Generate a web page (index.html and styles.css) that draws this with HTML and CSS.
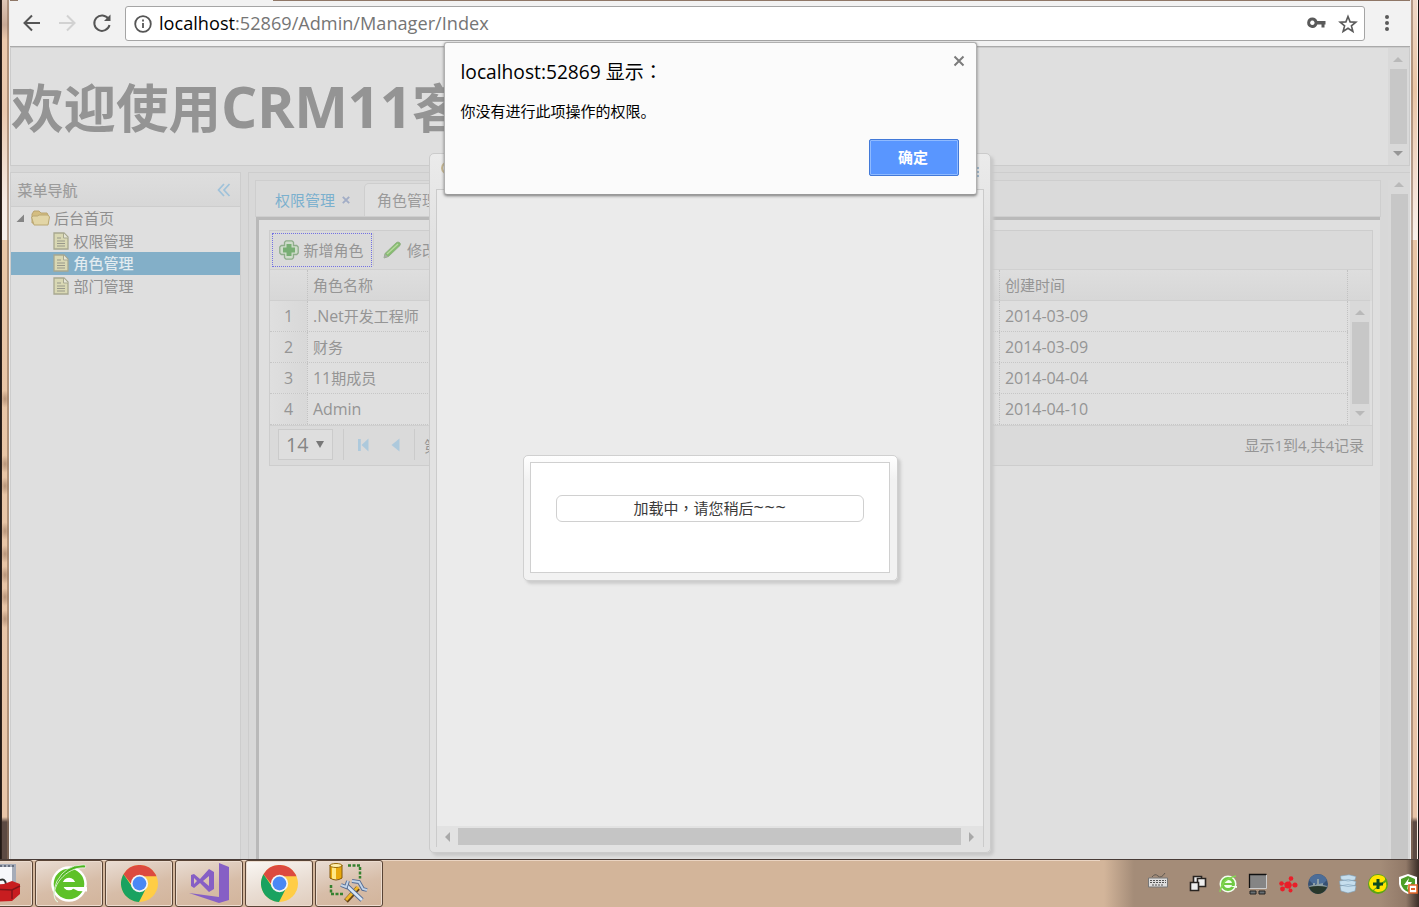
FILE: index.html
```html
<!DOCTYPE html>
<html lang="zh-CN">
<head>
<meta charset="utf-8">
<title>CRM</title>
<link rel="stylesheet" href="styles.css">
</head>
<body>
<svg class="defs" width="0" height="0">
  <symbol id="doc" viewBox="0 0 16 18"><path d="M1 1h10l4 4v12H1z" fill="#d9d8b4" stroke="#a8a890" stroke-width="1.3"/><path d="M10.500 1v5H15" fill="#e6e6d8" stroke="#a8a890"/><path d="M4 6h4M4 9h8M4 11.500h8M4 14h8" stroke="#97978a" stroke-width="1.200"/></symbol>
  <symbol id="chrome" viewBox="0 0 36 36"><circle cx="18" cy="18" r="18" fill="#ffcd46"/><path d="M2.400 9A18 18 0 0 1 33.600 9L34.500 11H18a7.500 7.500 0 0 0-7.500 8z" fill="#dc4a3f"/><path d="M2.400 9A18 18 0 0 0 17.500 36L25 21.500a8 8 0 0 1-14 0z" fill="#1aa260"/><circle cx="18" cy="18" r="8.400" fill="#f4f4f4"/><circle cx="18" cy="18" r="6.700" fill="#4a88f4"/></symbol>
</svg>
<div class="screen">
  <div class="edge edge-left"></div>
  <div class="browser">
    <div class="tabstrip"><i></i></div>
    <div class="toolbar">
      <svg class="nav" width="90" height="20" viewBox="0 0 90 20" fill="none" stroke="#555" stroke-width="2"><path d="M17 10H2M9 2.500L1.500 10 9 17.500"/><path d="M36 10h15M44 2.500l7.500 7.500-7.500 7.500" stroke="#d2d2d2"/><path d="M85.500 6A7.700 7.700 0 1 0 86.500 12"/><path d="M87.500 1.500V8H81z" fill="#555" stroke="none"/></svg>
      <div class="omnibox">
        <svg width="18" height="18" viewBox="0 0 18 18" fill="none" stroke="#555" stroke-width="1.800"><circle cx="9" cy="9" r="7.800"/><path d="M9 8v5M9 4.500v2"/></svg>
        <span class="url"><b>localhost</b>:52869/Admin/Manager/Index</span>
        <svg class="key" width="19" height="12" viewBox="0 0 19 12"><path fill="#5a5a5a" fill-rule="evenodd" d="M5.500 0.500a5.200 5.200 0 0 1 4.800 3.500H18.500v3.500H17.500V10.500H14.500V7.500H10.300A5.200 5.200 0 1 1 5.500.5zM5.300 3.600a2.200 2.200 0 1 0 .1 0z"/></svg>
        <svg width="20" height="20" viewBox="0 0 20 20" fill="none" stroke="#5a5a5a" stroke-width="1.600"><path d="M10 2.500l2.100 5.400 5.700.3-4.400 3.600 1.500 5.600-4.900-3.100-4.900 3.100 1.500-5.600-4.400-3.600 5.700-.3z"/></svg>
      </div>
      <svg class="dots" width="6" height="18" viewBox="0 0 6 18" fill="#5a5a5a"><circle cx="3" cy="3" r="2"/><circle cx="3" cy="9" r="2"/><circle cx="3" cy="15" r="2"/></svg>
    </div>
    <div class="page">
      <header class="banner"><h1>欢迎使用<span>CRM11</span>客</h1>
        <div class="vbar"><i class="up"></i><b></b><i class="down"></i></div>
      </header>
      <div class="columns">
        <aside class="sidebar">
          <div class="side-head"><span>菜单导航</span><svg width="14" height="14" viewBox="0 0 14 14" fill="none" stroke="#9fc2da" stroke-width="1.700"><path d="M7 1L1.500 7 7 13M12.500 1L7 7l5.500 6"/></svg></div>
          <div class="node root"><svg width="9" height="9" viewBox="0 0 9 9"><path d="M8 .5V8H.5z" fill="#858585"/></svg><svg class="folder" width="19" height="16" viewBox="0 0 19 16"><path d="M1 13V4l2-3h5l2 2h6l1 2v9z" fill="#d4bd80" stroke="#b9a470"/><path d="M.5 7l2-1h4l1.500-1h9l1.500 2-1.500 8H3z" fill="#e2d5a6" stroke="#bba873"/></svg><span>后台首页</span></div>
          <div class="node first"><svg width="16" height="18"><use href="#doc"/></svg><span>权限管理</span></div>
          <div class="node selected"><svg width="16" height="18"><use href="#doc"/></svg><span>角色管理</span></div>
          <div class="node"><svg width="16" height="18"><use href="#doc"/></svg><span>部门管理</span></div>
        </aside>
        <main class="main">
          <div class="workspace">
            <div class="tabs"><div class="tab current"><span>权限管理</span><svg width="8" height="8" viewBox="0 0 8 8"><path d="M.8.8l6.400 6.400M7.200.8L.8 7.200" stroke="#a2adc6" stroke-width="1.900"/></svg></div><div class="tab other"><span>角色管理</span></div></div>
            <div class="tab-body">
              <div class="grid">
                <div class="grid-tools">
                  <div class="tool focused"><svg width="20" height="20" viewBox="0 0 20 20"><path d="M7 .8h6l1.500 1.500V5.500h3.200l1.500 1.500v6l-1.500 1.500h-3.200v3.200L13 19.200H7l-1.500-1.500v-3.200H2.300L.8 13V7l1.500-1.500h3.200V2.300z" fill="#cfdccb" stroke="#8fad8b" stroke-width="1.300"/><path d="M7.500 4h5v3.500H16v5h-3.500V16h-5v-3.500H4v-5h3.500z" fill="#78ae74"/></svg><span>新增角色</span></div>
                  <div class="tool edit"><svg width="18" height="18" viewBox="0 0 18 18"><path d="M2 12.500L13.500 1.500q1.500-1 3 0t.5 3L5.500 15.500 1 17z" fill="#86bd70" stroke="#8aa97e" stroke-width=".8"/><path d="M4 13L15 3" stroke="#b9d8a2" stroke-width="1.300"/><path d="M1 17l1-4 3 2.500z" fill="#aaa"/></svg><span>修改角色</span></div>
                </div>
                <div class="grid-row heading"><div class="num"></div><div class="name">角色名称</div><div class="date">创建时间</div></div>
                <div class="grid-data">
                  <div class="rows">
                    <div class="grid-row"><div class="num lat">1</div><div class="name"><span class="lat">.Net</span>开发工程师</div><div class="date lat">2014-03-09</div></div>
                    <div class="grid-row"><div class="num lat">2</div><div class="name">财务</div><div class="date lat">2014-03-09</div></div>
                    <div class="grid-row"><div class="num lat">3</div><div class="name"><span class="lat">11</span>期成员</div><div class="date lat">2014-04-04</div></div>
                    <div class="grid-row"><div class="num lat">4</div><div class="name lat">Admin</div><div class="date lat">2014-04-10</div></div>
                  </div>
                  <div class="vbar"><i class="up"></i><b></b><i class="down pale"></i></div>
                </div>
                <div class="pager">
                  <div class="size"><span>14</span><i></i></div>
                  <div class="pages"><svg width="12" height="14" viewBox="0 0 12 14" fill="#adc9dc"><path d="M1 1h2.800v12H1zM11.500 .5v13L4.500 7z"/></svg><svg width="9" height="14" viewBox="0 0 9 14" fill="#adc9dc"><path d="M8.500 .5v13L.5 7z"/></svg></div>
                  <span class="pageno">第</span>
                  <span class="total">显示1到4,共4记录</span>
                </div>
              </div>
            </div>
          </div>
          <div class="vbar tall"><i class="up"></i><b></b></div>
        </main>
      </div>
    </div>
  </div>
  <div class="edge edge-right"></div>
</div>

<div class="window">
  <div class="window-title"><i></i><b></b></div>
  <div class="window-body"><div class="hbar"><i class="left"></i><b></b><i class="right"></i></div></div>
</div>
<div class="loading"><div class="loading-body"><div class="pill">加载中<span class="mid" lang="zh-TW">，</span>请您稍后<span class="tilde">~~~</span></div></div></div>

<div class="alert">
  <div class="alert-head"><span><em>localhost:52869</em> 显示<span class="mid" lang="zh-TW">：</span></span><svg width="12" height="12" viewBox="0 0 12 12"><path d="M1.500 1.500l9 9M10.500 1.500l-9 9" stroke="#7b7b7b" stroke-width="2"/></svg></div>
  <p>你没有进行此项操作的权限。</p>
  <button>确定</button>
</div>

<div class="taskbar">
  <div class="task clipped"><svg width="54" height="40" viewBox="0 0 54 40"><path d="M16 1h28v28H16z" fill="#a6acb8"/><path d="M18 4h22v22H18z" fill="#f7f8fb"/><path d="M16 3h28" stroke="#666f80" stroke-width="2" stroke-dasharray="2 2"/><path d="M28 17q5-2 6 4" fill="none" stroke="#333" stroke-width="2"/><path d="M20 22l12-1 8-3 8 3v10l-8 7-20 1z" fill="#c81d20"/><path d="M20 26l20 1 8-4M40 27v9" fill="none" stroke="#82151a" stroke-width="1.500"/></svg></div>
  <div class="task"><svg width="38" height="40" viewBox="0 0 38 40"><circle cx="19" cy="21" r="17.800" fill="#fff"/><circle cx="19" cy="21" r="10.800" fill="none" stroke="#5ec128" stroke-width="9"/><path d="M10 21.500h24" stroke="#5ec128" stroke-width="5"/><path d="M20 24h17v4.500l-9-.5z" fill="#fff"/><path d="M6 38C-1 25 16 3 35 5q2-4-3-3Q16 2 7 18 0 34 8 39z" fill="#4cb51e" stroke="#eef8e9" stroke-width=".8"/></svg></div>
  <div class="task"><svg width="37" height="37"><use href="#chrome"/></svg></div>
  <div class="task"><svg width="40" height="40" viewBox="0 0 40 40" fill="#865fc5"><path d="M30 0l10 4v33l-10 3L0 30l30 4z"/><path fill-rule="evenodd" d="M2 12l3-1 6 5 9-10 5 3v17l-5 3-9-9-6 5-3-2zm3 3v6l3-3zm9 3l6 5V13z"/></svg></div>
  <div class="task active"><svg width="37" height="37"><use href="#chrome"/></svg></div>
  <div class="task"><svg width="40" height="40" viewBox="0 0 40 40"><path d="M1 2h12v14H1z" fill="#e9a90c"/><path d="M3 2h4v15H3z" fill="#ffe885"/><ellipse cx="7" cy="2.500" rx="6" ry="2" fill="#fff0ad" stroke="#9b6b09"/><path d="M1 2v13q6 4 12 0V2" fill="none" stroke="#83580c"/><path d="M19 2.500h12v13M2 22v9h13" fill="none" stroke="#35812f" stroke-width="2.500" stroke-dasharray="3 1.500"/><path d="M17 38l12-13" stroke="#654316" stroke-width="5"/><path d="M17 37l12-13" stroke="#efb62b" stroke-width="3"/><path d="M16 21l17 16" stroke="#526a92" stroke-width="4.500"/><path d="M16 21l17 16" stroke="#d7e5f5" stroke-width="2.800"/><path d="M12 22l5 2 2-6M23 18l7 1 4 7 4 1" fill="none" stroke="#526a92" stroke-width="3.800"/><path d="M12 22l5 2 2-6M23 18l7 1 4 7 4 1" fill="none" stroke="#c3d4e8" stroke-width="2"/></svg></div>
  <div class="tray">
    <svg class="keyboard" width="20" height="17" viewBox="0 0 20 17"><path d="M4 4q3-4 6-1t7-3" fill="none" stroke="#5f5952"/><path d="M.5 5h19v9H.5z" fill="#ddd" stroke="#777"/><path d="M2 7.500h16M2 9.500h16M4 12h12" stroke="#555" stroke-dasharray="2 1"/></svg>
    <svg width="20" height="20" viewBox="0 0 20 20" fill="#eee" stroke="#292421" stroke-width="1.600"><path d="M5.500 2.500h8v7h-8z"/><path d="M9.500 4.500h8v8h-8z"/><path d="M2.500 8.500h8v8h-8z"/></svg>
    <svg width="20" height="20" viewBox="0 0 20 20"><circle cx="10" cy="10" r="8.500" fill="#f4fff0"/><circle cx="10" cy="10" r="5.500" fill="none" stroke="#70c944" stroke-width="3"/><path d="M4 10h12" stroke="#70c944" stroke-width="2"/><path d="M11 12h8v2z" fill="#f4fff0"/><path d="M2 18Q4 5 18 2" fill="none" stroke="#83d850" stroke-width="1.500"/></svg>
    <svg width="20" height="22" viewBox="0 0 20 22"><path d="M1.500 2h17v13h-17z" fill="#858585"/><path d="M1.500 15V1.500h17" fill="none" stroke="#111" stroke-width="1.300"/><path d="M18.500 2v13.500h-17" fill="none" stroke="#ccc"/><path d="M2 18h6v3H2zM11 18h6v3h-6z" fill="#686f73" stroke="#222"/></svg>
    <svg width="20" height="20" viewBox="0 0 20 20" fill="#ea1e29"><circle cx="10" cy="11" r="3.600"/><circle cx="3.500" cy="9.500" r="2.300"/><circle cx="13" cy="4.500" r="2.300"/><circle cx="17" cy="11" r="2.500"/><circle cx="4.500" cy="15" r="2.400"/><circle cx="12.500" cy="16.500" r="2"/><path d="M4 9l6 2 3-6M16 11h-6l-5 4M10 11l2 5" stroke="#ea1e29" stroke-width=".8" fill="none"/></svg>
    <svg width="20" height="20" viewBox="0 0 20 20"><circle cx="10" cy="10" r="10" fill="#375173"/><path d="M1 6A10 10 0 0 1 19 6L15 10H5z" fill="#4c6d98"/><path d="M1 12l4-1V9h2v2l2-1V5h2v5l4-1v2l4 1-1 2H2z" fill="#8fa0a5"/><path d="M1 13q9-2 18 0-3 7-9 7t-9-7z" fill="#28372b"/></svg>
    <svg width="20" height="20" viewBox="0 0 20 20" fill="#c6deed" stroke="#7e9fb8" stroke-width=".6"><path d="M2 12l8-1.500 8 1.500-1 5-7 2-7-2zM1.500 7l9-1.500 7.500 2-1 4-7 1-8-1.500zM2.500 2L11 .8l7 1.700-1 3.500-7 1-7-1.500z"/></svg>
    <svg width="20" height="20" viewBox="0 0 20 20"><circle cx="10" cy="10" r="10" fill="#5aa514"/><path d="M1 9Q3 0 11 1q7 1 6 5L5 16q-4-2-4-7zM18 8q2 9-7 10-4 0-5-2z" fill="#ffe500"/><path d="M10 5v10M5 10h10" stroke="#0d4a20" stroke-width="3"/></svg>
    <svg width="20" height="20" viewBox="0 0 20 20"><path d="M10 0l9 3v7q-2 7-9 10Q2 17 1 10V3z" fill="#fff"/><path d="M10 2l7 3v5q-1 5-7 8-6-3-7-8V5z" fill="#4d9e27"/><path d="M11 4l-5 7h4l-1 5 5-8h-4z" fill="#fff"/><path d="M11 11h8v8h-8z" fill="#fff" stroke="#e36628" stroke-width="1.600"/><path d="M13 15h4" stroke="#e36628" stroke-width="2"/></svg>
  </div>
</div>
</body>
</html>
```
FILE: styles.css
```css
* { box-sizing: border-box; }
body {
  margin: 0; width: 1419px; height: 907px; overflow: hidden; position: relative;
  display: flex; flex-direction: column; background: #d3b59a;
  font: 15px/20px "Open Sans", "Noto Sans CJK SC", sans-serif; color: #959595;
}
svg { display: block; flex: none; }
span { white-space: nowrap; }
.defs { position: absolute; }
.mid { font-family: "Noto Sans CJK TC", sans-serif; line-height: 1; }
.screen { height: 859px; display: flex; }
.edge { flex: none; }
.edge-left {
  width: 10px;
  background:
    linear-gradient(90deg, #211916 0 1px, #2d211c 1px 2px, transparent 2px 7px, #8b705c99 7px 9px, #eee 9px),
    radial-gradient(ellipse at center, #8f6c5588, transparent 70%) 0 390px / 10px 18px no-repeat,
    radial-gradient(ellipse at center, #8f6c5588, transparent 70%) 0 455px / 10px 18px no-repeat,
    radial-gradient(ellipse at center, #8f6c5588, transparent 70%) 0 477px / 10px 18px no-repeat,
    radial-gradient(ellipse at center, #8f6c5588, transparent 70%) 0 522px / 10px 18px no-repeat,
    radial-gradient(ellipse at center, #8f6c5588, transparent 70%) 0 545px / 10px 18px no-repeat,
    radial-gradient(ellipse at center, #8f6c5588, transparent 70%) 0 566px / 10px 18px no-repeat,
    radial-gradient(ellipse at center, #8f6c5588, transparent 70%) 0 588px / 10px 18px no-repeat,
    radial-gradient(ellipse at center, #8f6c5588, transparent 70%) 0 610px / 10px 18px no-repeat,
    linear-gradient(#dfc6b6 0, #c9aa96 25px, #ecc9ac 40px, #e9c8ad 110px, #f6eae2 200px, #f8f1ec 240px, #e9c6a6 240px, #e8c5a8 817px, #5c4a43 822px);
}
.edge-right {
  width: 9px;
  background:
    linear-gradient(90deg, #eee 0 1px, #8b705c99 1px 3px, transparent 3px 7px, #f9ede2 7px 8px, #161312 8px),
    linear-gradient(#eed8c7 0, #e9c5a5 90px, #f3ded0 180px, #f8f1ec 240px, #e9c6a6 240px, #e8c5a8 817px, #5c4a43 822px);
}
.browser { width: 1400px; display: flex; flex-direction: column; background: #f2f2f2; }
.tabstrip { height: 1px; background: #8f7767; padding-left: 8px; }
.tabstrip i { display: block; width: 255px; height: 1px; background: #f2f2f2; }
.toolbar { height: 46px; border-bottom: 1px solid #aaa; display: flex; align-items: center; padding: 0 20px 0 13px; }
.nav { margin-right: 12px; margin-bottom: 1px; }
.omnibox { width: 1240px; height: 35px; border: 1px solid #a5a5a5; border-radius: 3px; background: #fff; display: flex; align-items: center; padding: 0 6px 0 8px; flex: none; }
.url { font-size: 18.15px; margin: -2px 0 0 7px; color: #757575; flex: 1; }
.url b { font-weight: 400; color: #000; }
.key { margin: -1px 12px 0 0; }
.dots { margin: -2px 0 0 19px; }
.page { flex: 1; min-height: 0; background: #d8d8d8; display: flex; flex-direction: column; }
.banner { height: 119px; border: 1px solid #cbcbcb; background: #dfdfdf; display: flex; justify-content: space-between; overflow: hidden; }
h1 { margin: 0; font-size: 52.5px; line-height: 120px; color: #949494; white-space: nowrap; }
h1 span { font-size: 57px; line-height: 1; letter-spacing: -.4px; }
.vbar { flex: none; width: 21px; background: #d9d9d9; display: flex; flex-direction: column; align-items: center; padding: 9px 1px 9px 0; }
.vbar b { width: 17px; flex: 1; background: #c7c7c7; margin: 7px 0; }
.vbar i { width: 0; height: 0; border: 5px solid transparent; }
.vbar .up { border-top: 0; border-bottom-color: #b9b9b9; }
.vbar .down { border-bottom: 0; border-top-color: #969696; }
.vbar .down.pale { border-top-color: #b9b9b9; }
.columns { flex: 1; min-height: 0; margin-top: 6px; display: flex; gap: 7px; }
.sidebar { width: 231px; border: 1px solid #cdcdcd; border-bottom: 0; background: #dfdfdf; }
.side-head { height: 34px; border-bottom: 1px solid #cdcdcd; background: linear-gradient(#dedede, #d7d7d7); display: flex; align-items: center; justify-content: space-between; padding: 0 9px 0 6.5px; }
.side-head span { color: #9b9b9b; -webkit-text-stroke: .2px; }
.node { height: 23px; display: flex; align-items: center; padding: 0 0 1px 42px; gap: 4.5px; color: #8f8f8f; }
.node.first { padding: 1px 0 0 42px; }
.node.root { height: 22px; padding: 0 0 0 5px; gap: 4px; }
.folder { margin-left: 2px; }
.node.selected { background: #83afc8; color: #e5edf1; -webkit-text-stroke: .2px; }
.main { width: 1162px; border: solid #cdcdcd; border-width: 1px 0 0 1px; display: flex; justify-content: space-between; padding: 7px 0 0 6px; }
.workspace { width: 1126px; display: flex; flex-direction: column; }
.tabs { height: 37px; border: 1px solid #cecece; background: #dadada; display: flex; align-items: flex-end; }
.tab { display: flex; align-items: center; }
.tab.current { width: 108px; height: 35px; padding: 2px 0 0 19px; gap: 7px; color: #7bb0ce; }
.tab.other { width: 108px; height: 33px; border: 1px solid #cecece; border-bottom: 0; border-radius: 5px 5px 0 0; background: #dfdfdf; padding: 0 0 0 12px; color: #9a9a9a; }
.tab-body { flex: 1; margin: 0 1px 0; border: solid #b9b9b9; border-width: 3px 0 0 3px; background: #dfdfdf; padding: 10px 7px 0 10px; }
.grid { border: 1px solid #cdcdcd; height: 236px; background: #dadada; }
.grid-tools { height: 39px; border-bottom: 1px solid #d0d0d0; display: flex; padding: 2px 2px; }
.tool { display: flex; align-items: center; gap: 4.5px; }
.tool.focused { width: 100px; height: 34px; border: 1px dotted #7371e2; padding-left: 6px; }
.tool.edit { margin-left: 1px; padding: 1px 0 0 9px; height: 33px; border-left: 1px solid #cecece; gap: 6px; }
.grid-row { height: 31px; display: flex; border-bottom: 1px dotted #c6c6c6; width: 1078px; }
.grid-row > div { border-right: 1px dotted #c2c2c2; padding: 5px 5px 0; white-space: nowrap; }
.grid-row .num { width: 38px; text-align: center; background: linear-gradient(90deg, #dfdfdf, #d8d8d8); }
.grid-row .name { width: 692px; }
.grid-row .date { width: 348px; }
.grid-row.heading { width: 1100px; background: linear-gradient(#dedede, #d7d7d7); border-bottom: 1px solid #cfcfcf; }
.grid-row.heading .num { background: none; }
.lat { font-size: 16px; letter-spacing: -.05px; }
.grid-data { display: flex; height: 124px; background: #dfdfdf; gap: 2px; }
.grid-data .vbar { width: 20px; padding-right: 0; }
.pager { height: 41px; border-top: 1px solid #cfcfcf; display: flex; align-items: center; padding: 0 8px 3px; }
.size { width: 55px; height: 31px; border: 1px solid #cbcbcb; background: #dedede; display: flex; align-items: center; padding: 0 7px; gap: 8px; color: #858585; font-size: 19.500px; }
.size i { border: 4px solid transparent; border-top: 7px solid #777; border-bottom: 0; margin-top: -1px; }
.pages { margin-left: 10px; width: 72px; height: 31px; border: solid #cbcbcb; border-width: 0 1px; display: flex; align-items: center; gap: 22px; padding-left: 13px; }
.pageno { margin: 2px 0 0 9px; }
.total { margin-left: auto; }
.tall { width: 22px; padding: 2px 0 0; }
.tall b { margin-bottom: 0; }
.window { position: absolute; left: 429px; top: 153px; width: 562px; height: 700px; border: 1px solid #cbcbcb; border-radius: 5px; background: linear-gradient(#ebebeb, #e2e2e2 80px); box-shadow: 3px 3px 3px #c9c9c9; padding: 0 6px 5px; display: flex; flex-direction: column; }
.window-title { height: 35px; display: flex; align-items: center; justify-content: space-between; padding: 0 5px 8px; }
.window-title i { width: 16px; height: 14px; border: 2px solid #c7b78e; border-radius: 50%; }
.window-title b { width: 13px; height: 10px; margin-top: 8px; border: 2px dotted #9db6cc; }
.window-body { flex: 1; border: 1px solid #cbcbcb; border-bottom: 0; background: #ebebeb; display: flex; align-items: flex-end; }
.hbar { width: 546px; height: 21px; background: #e2e2e2; display: flex; align-items: center; justify-content: space-between; padding: 0 9px 0 8px; }
.hbar b { width: 503px; height: 17px; background: #c5c5c5; }
.hbar i { border: 5px solid transparent; }
.hbar .left { border-left: 0; border-right-color: #a9a9a9; }
.hbar .right { border-right: 0; border-left-color: #a9a9a9; }
.loading { position: absolute; left: 523px; top: 455px; width: 375px; height: 126px; border: 1px solid #d0d0d0; border-radius: 5px; background: linear-gradient(#fff, #f2f2f2 24px); box-shadow: 3px 3px 3px #ccc; padding: 6px 7px 7px 6px; }
.loading-body { height: 111px; border: 1px solid #d0d0d0; background: #fff; padding: 32px 25px; }
.pill { height: 27px; border: 1px solid #d0d0d0; border-radius: 6px; text-align: center; line-height: 24px; color: #3a3a3a; white-space: nowrap; }
.tilde { font-size: 18px; line-height: 1; letter-spacing: .7px; }
.alert { position: absolute; left: 444px; top: 42px; width: 533px; height: 153px; border: 1px solid #b0b0b0; border-bottom-color: #999; border-radius: 3px; background: #fbfbfb; box-shadow: 0 1px 3px #777; padding: 12px 17px 18px 15.5px; display: flex; flex-direction: column; color: #000; }
.alert-head { display: flex; justify-content: space-between; font-size: 19px; line-height: 33px; }
.alert-head em { font-style: normal; font-size: 19.200px; }
.alert-head svg { margin-right: -6px; }
.alert p { margin: 11px 0 0; line-height: 22px; }
.alert button { width: 90px; height: 37px; margin: auto 0 0 auto; border: 1px solid #4279d8; border-radius: 2px; box-shadow: inset 0 0 0 1px #8fbaff; background: #5996ff; color: #fff; font: 700 15px "Noto Sans CJK SC", sans-serif; padding: 0 2px 2px 0; }
.taskbar { height: 48px; border-top: 1px solid #493c37; box-shadow: inset 0 1px #ead4c2; background: #d3b59a; display: flex; gap: 2px; }
.task { flex: none; width: 68px; height: 47px; border: 1px solid #594436; border-radius: 3px; box-shadow: inset 0 0 0 1px #ecdccf; background: linear-gradient(165deg, #e9ddd4, #d7bda8 55%, #d2b49b); display: flex; align-items: center; justify-content: center; padding: 0 0 1px 0; }
.task.clipped { margin-left: -35px; }
.task.active { background: linear-gradient(165deg, #faf7f4, #e9ddd3 55%, #e0cdbd); }
.tray { margin-left: auto; width: 319px; display: flex; align-items: center; gap: 10px; padding: 1px 1px 0 49px; background: linear-gradient(90deg, #d3b59a 4px, #a48c78 34px, #a48c78 280px, #917968 306px, #3a2d27); }
.keyboard { margin: 0 9.500px 5px -1px; }
```
